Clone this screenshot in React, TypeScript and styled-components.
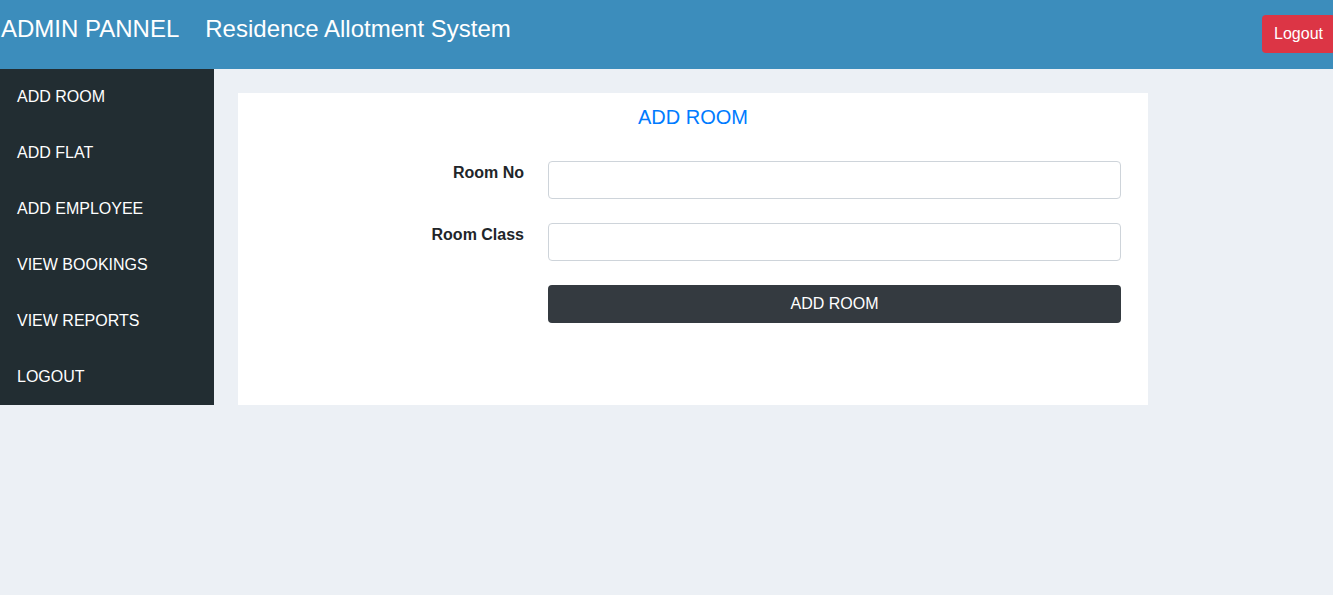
import React from "react";
import styled, { createGlobalStyle } from "styled-components";

const Global = createGlobalStyle`
  html, body { margin: 0; padding: 0; }
  body {
    font-family: "Liberation Sans", Arial, sans-serif;
    background: #ecf0f5;
    overflow: hidden;
  }
  * { box-sizing: border-box; }
`;

const Page = styled.div`
  width: 1333px;
  min-height: 595px;
  background: #ecf0f5;
  display: flex;
  flex-direction: column;
`;

const Header = styled.header`
  height: 69px;
  background: #3c8dbc;
  display: flex;
  align-items: flex-start;
  padding-left: 1px;
`;

const Brand = styled.div`
  color: #fff;
  font-size: 24px;
  line-height: 28px;
  margin-top: 15px;
  white-space: nowrap;
`;

const SystemName = styled(Brand)`
  margin-left: 26px;
`;

const LogoutButton = styled.button`
  margin-left: auto;
  margin-right: -2px;
  margin-top: 15px;
  height: 38px;
  padding: 0 12px;
  border: none;
  border-radius: 4px;
  background: #dc3545;
  color: #fff;
  font-family: "Liberation Sans", Arial, sans-serif;
  font-size: 16px;
  line-height: 24px;
  cursor: pointer;
`;

const Body = styled.div`
  display: flex;
  align-items: flex-start;
`;

const Sidebar = styled.nav`
  width: 214px;
  background: #222d32;
  display: flex;
  flex-direction: column;
`;

const NavItem = styled.a`
  height: 56px;
  display: flex;
  align-items: center;
  padding-left: 17px;
  color: #fff;
  font-size: 16px;
  text-decoration: none;
  text-transform: uppercase;
`;

const Content = styled.main`
  flex: 1;
  padding: 24px 0 0 24px;
`;

const Card = styled.section`
  width: 910px;
  height: 312px;
  background: #fff;
  padding-top: 12px;
`;

const Title = styled.h2`
  margin: 0;
  text-align: center;
  color: #007bff;
  font-size: 20px;
  font-weight: normal;
  line-height: 24px;
`;

const Form = styled.form`
  margin-top: 32px;
  display: grid;
  grid-template-columns: 286px 573px;
  column-gap: 24px;
  row-gap: 24px;
`;

const Label = styled.label`
  text-align: right;
  font-weight: bold;
  font-size: 16px;
  line-height: 24px;
  color: #212529;
  align-self: start;
`;

const Input = styled.input`
  height: 38px;
  width: 100%;
  border: 1px solid #ced4da;
  border-radius: 4px;
  background: #fff;
  padding: 6px 12px;
  font-size: 16px;
  font-family: "Liberation Sans", Arial, sans-serif;
`;

const Submit = styled.button`
  grid-column: 2;
  height: 38px;
  border: none;
  border-radius: 4px;
  background: #343a40;
  color: #fff;
  font-family: "Liberation Sans", Arial, sans-serif;
  font-size: 16px;
  cursor: pointer;
`;

const navItems = ["Add Room", "Add Flat", "Add Employee", "View Bookings", "View Reports", "Logout"];

export default function App() {
  return (
    <Page>
      <Global />
      <Header>
        <Brand>ADMIN PANNEL</Brand>
        <SystemName>Residence Allotment System</SystemName>
        <LogoutButton>Logout</LogoutButton>
      </Header>
      <Body>
        <Sidebar>
          {navItems.map((n) => (
            <NavItem key={n} href="#">{n}</NavItem>
          ))}
        </Sidebar>
        <Content>
          <Card>
            <Title>ADD ROOM</Title>
            <Form onSubmit={(e) => e.preventDefault()}>
              <Label htmlFor="roomNo">Room No</Label>
              <Input id="roomNo" />
              <Label htmlFor="roomClass">Room Class</Label>
              <Input id="roomClass" />
              <Submit type="submit">ADD ROOM</Submit>
            </Form>
          </Card>
        </Content>
      </Body>
    </Page>
  );
}
